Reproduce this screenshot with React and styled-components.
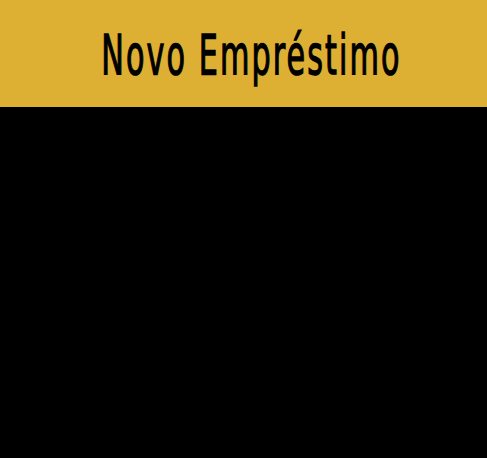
import React from "react";
import styled, { createGlobalStyle } from "styled-components";

const Global = createGlobalStyle`
  html, body { margin: 0; padding: 0; background: #000; }
  #root { min-height: 100vh; background: #000; }
`;

const Page = styled.div`
  display: flex;
  flex-direction: column;
  min-height: 100vh;
  background: #000;
`;

const Header = styled.header`
  height: 107px;
  background: #ddaf33;
  display: flex;
  align-items: center;
  justify-content: center;
  padding-left: 16px;
  padding-top: 2px;
  box-sizing: border-box;
`;

const Title = styled.h1`
  margin: 0;
  font-family: "DejaVu Sans Condensed", "DejaVu Sans", sans-serif;
  font-weight: 400;
  font-size: 56px;
  line-height: 1;
  letter-spacing: 3.5px;
  color: #000;
  transform: scaleX(0.6);
  -webkit-text-stroke: 1.3px #000;
  white-space: nowrap;
`;

export default function App() {
  return (
    <Page>
      <Global />
      <Header>
        <Title>Novo Empréstimo</Title>
      </Header>
    </Page>
  );
}
